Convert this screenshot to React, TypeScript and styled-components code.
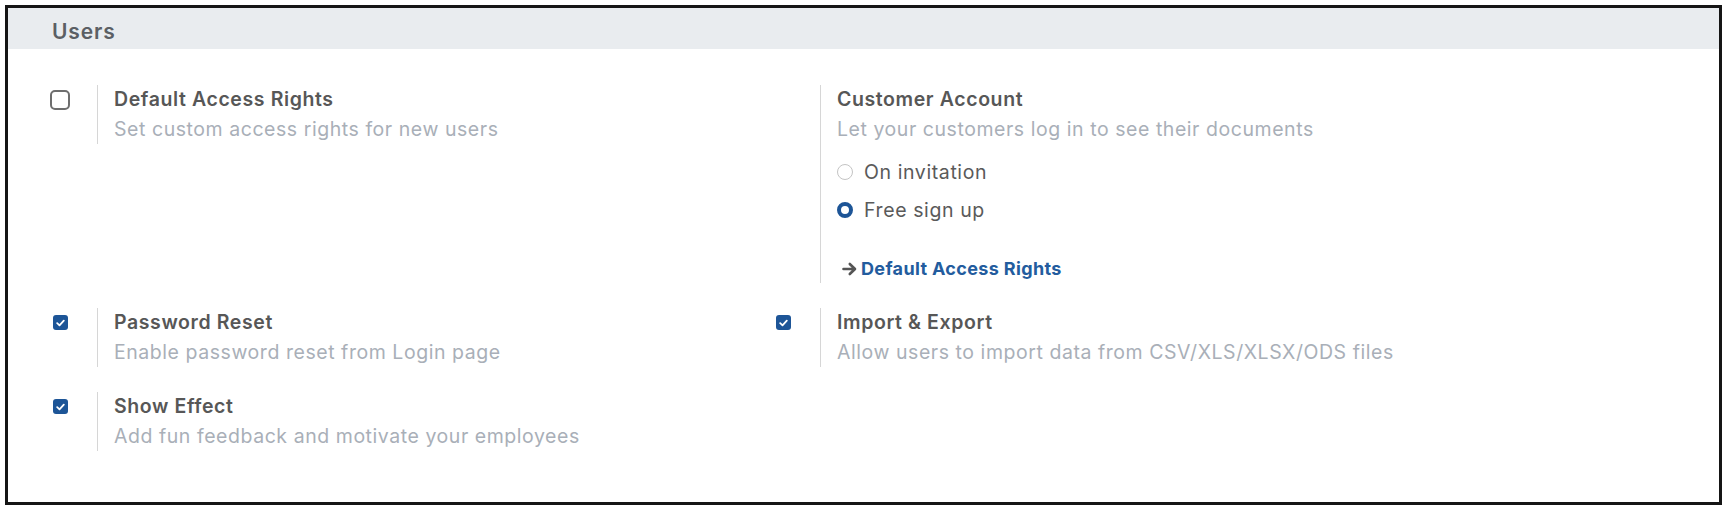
import React from 'react';
import styled, { createGlobalStyle } from 'styled-components';

const GlobalStyle = createGlobalStyle`
  html, body { margin: 0; padding: 0; background: #fff; }
  body { font-family: Inter, "Noto Sans", sans-serif; }
`;

const Frame = styled.div`
  box-sizing: border-box;
  margin: 5px 0 0 5px;
  width: 1717px;
  height: 500px;
  border: 3px solid #151515;
  background: #fff;
  overflow: hidden;
`;

const SectionHeader = styled.h2`
  box-sizing: border-box;
  margin: 0;
  height: 41px;
  padding: 11px 0 0 44px;
  background: #e9ecef;
  font-size: 21px;
  line-height: 25px;
  font-weight: 600;
  letter-spacing: 0.9px;
  color: #5b5f64;
`;

const Settings = styled.div`
  display: grid;
  grid-template-columns: 723px 723px;
  row-gap: 25px;
  align-items: start;
  padding: 36px 0 0 37px;
`;

const SettingBox = styled.div`
  display: flex;
  align-items: flex-start;
`;

const LeftPane = styled.div`
  width: 30px;
  height: 29px;
  margin-right: 22px;
  display: flex;
  align-items: center;
  justify-content: center;
  flex-shrink: 0;
`;

const RightPane = styled.div`
  flex: 1;
  border-left: 1px solid #d6d6d6;
  padding-left: 16px;
`;

const Title = styled.div`
  font-size: 19.5px;
  line-height: 29px;
  font-weight: 600;
  letter-spacing: 0.6px;
  color: #575757;
`;

const Description = styled.div`
  font-size: 19.5px;
  line-height: 30px;
  letter-spacing: 0.55px;
  color: #a9afb8;
`;

const EmptyBox = styled.span`
  box-sizing: border-box;
  width: 20px;
  height: 20px;
  border: 2px solid #6e6e6e;
  border-radius: 5px;
  background: #fff;
`;

const CheckedBox = styled.span`
  width: 15px;
  height: 15px;
  border-radius: 3px;
  background: #1d5597;
  display: flex;
  align-items: center;
  justify-content: center;
`;

const RadioGroup = styled.div`
  margin-top: 13px;
  display: flex;
  flex-direction: column;
  gap: 9px;
`;

const RadioRow = styled.label`
  height: 29px;
  display: flex;
  align-items: center;
  gap: 11px;
  font-size: 19.5px;
  letter-spacing: 0.6px;
  color: #5a5a5a;
`;

const RadioDot = styled.span<{ $checked?: boolean }>`
  box-sizing: border-box;
  width: 16px;
  height: 16px;
  border-radius: 50%;
  border: ${(p) => (p.$checked ? '4.5px solid #1d5597' : '1.5px solid #c4c4c4')};
  background: #fff;
`;

const ActionLink = styled.a`
  margin-top: 30px;
  height: 29px;
  padding-left: 5px;
  display: inline-flex;
  align-items: center;
  gap: 3px;
  font-size: 18px;
  font-weight: 700;
  letter-spacing: 0.35px;
  color: #235c9e;
  text-decoration: none;
`;

const Check = () => (
  <CheckedBox>
    <svg width="9" height="8" viewBox="0 0 9 8">
      <path d="M1.2 4.2 L3.5 6.3 L7.8 1.6" fill="none" stroke="#fff" strokeWidth="1.8" strokeLinecap="round" strokeLinejoin="round" />
    </svg>
  </CheckedBox>
);

const Arrow = () => (
  <svg width="16" height="14" viewBox="0 0 16 14">
    <path d="M1.5 7 H12.5 M7.8 2 L13 7 L7.8 12" fill="none" stroke="#555" strokeWidth="2.6" strokeLinecap="round" strokeLinejoin="round" />
  </svg>
);

const App = () => (
  <>
    <GlobalStyle />
    <Frame>
      <SectionHeader>Users</SectionHeader>
      <Settings>
        <SettingBox>
          <LeftPane>
            <EmptyBox />
          </LeftPane>
          <RightPane>
            <Title>Default Access Rights</Title>
            <Description>Set custom access rights for new users</Description>
          </RightPane>
        </SettingBox>

        <SettingBox>
          <LeftPane />
          <RightPane>
            <Title>Customer Account</Title>
            <Description>Let your customers log in to see their documents</Description>
            <RadioGroup>
              <RadioRow>
                <RadioDot />
                On invitation
              </RadioRow>
              <RadioRow>
                <RadioDot $checked />
                Free sign up
              </RadioRow>
            </RadioGroup>
            <ActionLink href="#">
              <Arrow />
              Default Access Rights
            </ActionLink>
          </RightPane>
        </SettingBox>

        <SettingBox>
          <LeftPane>
            <Check />
          </LeftPane>
          <RightPane>
            <Title>Password Reset</Title>
            <Description>Enable password reset from Login page</Description>
          </RightPane>
        </SettingBox>

        <SettingBox>
          <LeftPane>
            <Check />
          </LeftPane>
          <RightPane>
            <Title>Import &amp; Export</Title>
            <Description>Allow users to import data from CSV/XLS/XLSX/ODS files</Description>
          </RightPane>
        </SettingBox>

        <SettingBox>
          <LeftPane>
            <Check />
          </LeftPane>
          <RightPane>
            <Title>Show Effect</Title>
            <Description>Add fun feedback and motivate your employees</Description>
          </RightPane>
        </SettingBox>
      </Settings>
    </Frame>
  </>
);

export default App;
